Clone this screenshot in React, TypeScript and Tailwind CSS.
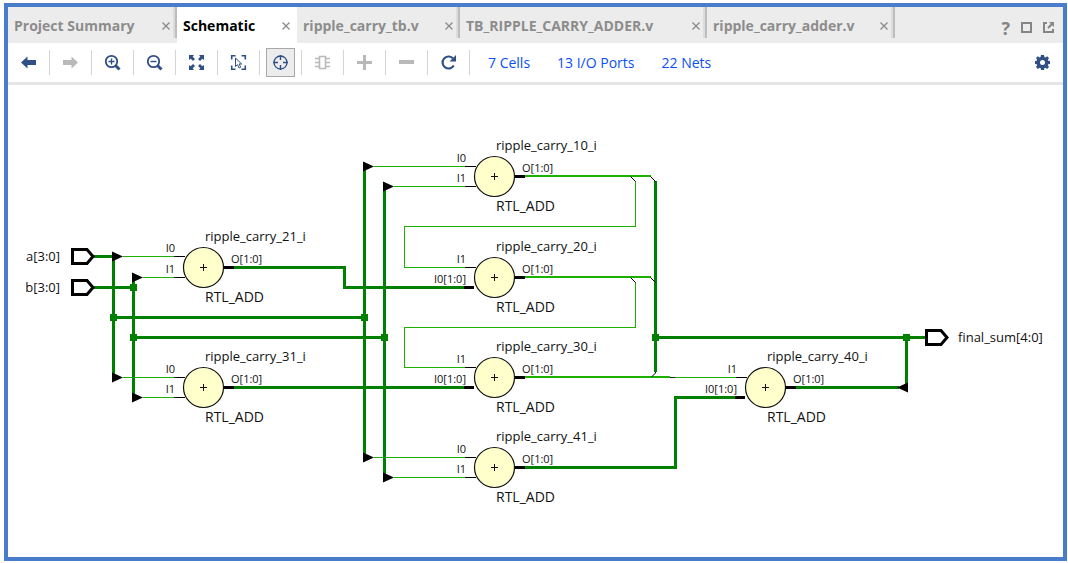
import type { ReactNode } from "react";

const NAVY = "#304f86";
const GREY = "#b9b9b9";

type Tab = { label: string; width: string; active?: boolean };

const tabs: Tab[] = [
  { label: "Project Summary", width: "w-[169px]" },
  { label: "Schematic", width: "w-[120px]", active: true },
  { label: "ripple_carry_tb.v", width: "w-[163px]" },
  { label: "TB_RIPPLE_CARRY_ADDER.v", width: "w-[247px]" },
  { label: "ripple_carry_adder.v", width: "w-[188px]" },
];

function TabItem({ label, width, active }: Tab) {
  return (
    <div className={`flex shrink-0 ${width} ${active ? "h-9 bg-white" : "h-[31px]"}`}>
      <div className="flex h-[38px] min-w-0 flex-1 items-center justify-between pl-[6px]">
        <button
          role="tab"
          aria-selected={!!active}
          className={`whitespace-nowrap text-[14px] font-bold leading-5 ${active ? "text-black" : "text-[#8c8c8c]"}`}
        >
          {label}
        </button>
        <button aria-label={`Close ${label}`} className={active ? "pr-[7px]" : "pr-[3px]"}>
          <svg width="8" height="8" viewBox="0 0 8 8" stroke="#8a8a8a" strokeWidth="1.3">
            <path d="M.5.5l7 7M7.5.5l-7 7" />
          </svg>
        </button>
      </div>
      {!active && <div className="h-[31px] w-1 border-r-2 border-[#bdbdbd] bg-[#dcdcdc]" />}
    </div>
  );
}

function Icon({ children, color = NAVY }: { children: ReactNode; color?: string }) {
  return (
    <svg width="17" height="17" viewBox="0 0 17 17" fill="none" stroke={color} color={color}>
      {children}
    </svg>
  );
}

const tools: { name: string; icon: ReactNode; active?: boolean; disabled?: boolean }[] = [
  {
    name: "Back",
    icon: <Icon><path d="M1 8.5L7.5 2.5V6H16v5H7.5v3.5z" fill="currentColor" stroke="none" /></Icon>,
  },
  {
    name: "Forward",
    disabled: true,
    icon: <Icon color={GREY}><path d="M16 8.5L9.5 2.5V6H1v5h8.5v3.5z" fill="currentColor" stroke="none" /></Icon>,
  },
  {
    name: "Zoom in",
    icon: (
      <Icon>
        <circle cx="7.5" cy="7.5" r="5.7" strokeWidth="1.8" />
        <path d="M4.5 7.5h6M7.5 4.5v6" strokeWidth="1.4" />
        <path d="M11.5 11.5l4 4" strokeWidth="3" />
      </Icon>
    ),
  },
  {
    name: "Zoom out",
    icon: (
      <Icon>
        <circle cx="7.5" cy="7.5" r="5.7" strokeWidth="1.8" />
        <path d="M4.5 7.5h6" strokeWidth="1.4" />
        <path d="M11.5 11.5l4 4" strokeWidth="3" />
      </Icon>
    ),
  },
  {
    name: "Zoom fit",
    icon: (
      <Icon>
        <path d="M1 1h5L4.7 2.7 7 5 5 7 2.7 4.7 1 6zM16 1v5l-1.7-1.3L12 7l-2-2 2.3-2.3L11 1zM1 16v-5l1.7 1.3L5 10l2 2-2.3 2.3L6 16zM16 16h-5l1.3-1.7L10 12l2-2 2.3 2.3L16 11z" fill="currentColor" stroke="none" />
      </Icon>
    ),
  },
  {
    name: "Select area",
    icon: (
      <Icon>
        <path d="M1.7 5.5V1.7H5.5M11.5 1.7h3.8v3.8M1.7 11.5v3.8H5.5M11.5 15.3h3.8v-3.8" strokeWidth="1.6" />
        <path d="M5.5 4v8.5l2-1.8 1.6 3.3 1.6-.8-1.6-3.2h2.6z" strokeWidth="1" />
      </Icon>
    ),
  },
  {
    name: "Auto fit selection",
    active: true,
    icon: (
      <Icon>
        <circle cx="8.5" cy="8.5" r="6.5" strokeWidth="1.3" />
        <path d="M8.5 1v5M8.5 11v5M1 8.5h5M11 8.5h5" strokeWidth="1.4" />
      </Icon>
    ),
  },
  {
    name: "Expand cell",
    disabled: true,
    icon: (
      <Icon color={GREY}>
        <path d="M5.5 2.5h6v12h-6z" strokeWidth="1.6" />
        <path d="M1 4.5h4M1 8.5h4M1 12.5h4M12 4.5h4M12 8.5h4M12 12.5h4" strokeWidth="1.4" />
      </Icon>
    ),
  },
  {
    name: "Add",
    disabled: true,
    icon: <Icon color={GREY}><path d="M1 8.5h15M8.5 1v15" strokeWidth="3" /></Icon>,
  },
  {
    name: "Remove",
    disabled: true,
    icon: <Icon color={GREY}><path d="M1 8h15" strokeWidth="4" /></Icon>,
  },
  {
    name: "Reload",
    icon: (
      <Icon>
        <path d="M13.8 11.5A6 6 0 1 1 12.8 4.2" strokeWidth="2.2" />
        <path d="M16 1v6.5H9.5z" fill="currentColor" stroke="none" />
      </Icon>
    ),
  },
];

const stats = ["7 Cells", "13 I/O Ports", "22 Nets"];

/* ---------- schematic ---------- */

type Pin = { label: string; dy: number; bus?: boolean };
type Cell = { name: string; x: number; y: number; pins: Pin[] };

const twoBits: Pin[] = [{ label: "I0", dy: -10 }, { label: "I1", dy: 10 }];
const bitAndBus: Pin[] = [{ label: "I1", dy: -10 }, { label: "I0[1:0]", dy: 10, bus: true }];

const cells: Cell[] = [
  { name: "ripple_carry_10_i", x: 494.5, y: 176.5, pins: twoBits },
  { name: "ripple_carry_20_i", x: 494.5, y: 277.5, pins: bitAndBus },
  { name: "ripple_carry_21_i", x: 203.5, y: 267.5, pins: [{ label: "I0", dy: -11 }, { label: "I1", dy: 10 }] },
  { name: "ripple_carry_30_i", x: 494.5, y: 377.5, pins: bitAndBus },
  { name: "ripple_carry_31_i", x: 203.5, y: 387.5, pins: twoBits },
  { name: "ripple_carry_40_i", x: 765.5, y: 387.5, pins: bitAndBus },
  { name: "ripple_carry_41_i", x: 494.5, y: 467.5, pins: twoBits },
];

const busWires = [
  "M94 256.5H114M113.5 256.5V377.5M94 287.5H133.5M133.5 277.5V397.5",
  "M113.5 317.5H364.5M364.5 166.5V457.5M133.5 337.5H384.5M384.5 186.5V477.5",
  "M234 267.5H344.5V287.5H464M234 387.5H464",
  "M525 467.5H675.5V397.5H735M655.5 181V372",
  "M655.5 337.5H925M906.5 337.5V387.5M796 387.5H899",
];

const bitWires = [
  "M123 256.5H174M143 277.5H174M123 377.5H174M143 397.5H174",
  "M374 166.5H465M394 186.5H465M374 457.5H465M394 477.5H465",
  "M635.5 181V226.5H404.5V267.5H465",
  "M635.5 282V327.5H404.5V367.5H465M675 377.5H736",
];

const junctions = [
  [113.5, 317.5], [133.5, 287.5], [133.5, 337.5], [364.5, 317.5],
  [384.5, 337.5], [655.5, 337.5], [906.5, 337.5],
];

const rippers = [
  [112, 256.5], [132, 277.5], [112, 377.5], [132, 397.5],
  [363, 166.5], [383, 186.5], [363, 457.5], [383, 477.5],
];

const ports = [
  { label: "a[3:0]", x: 71, y: 256.5, textX: 60, anchor: "end" as const },
  { label: "b[3:0]", x: 71, y: 287.5, textX: 60, anchor: "end" as const },
  { label: "final_sum[4:0]", x: 925, y: 337.5, textX: 958, anchor: "start" as const },
];

function AdderCell({ name, x, y, pins }: Cell) {
  return (
    <g>
      {pins.map((p) => (
        <g key={p.label}>
          <path
            d={`M${x - (p.bus ? 30.5 : 29.5)} ${y + p.dy}H${x - (p.bus ? 20.5 : 18.5)}`}
            stroke="#000"
            strokeWidth={p.bus ? 3 : 1}
            shapeRendering="crispEdges"
          />
          <text x={x - 28.5} y={y + p.dy - 4.5} textAnchor="end" className="text-[11px]">{p.label}</text>
        </g>
      ))}
      <path d={`M${x + 20} ${y}H${x + 30.5}`} stroke="#000" strokeWidth="3" shapeRendering="crispEdges" />
      <circle cx={x} cy={y} r="20" fill="#ffffcc" stroke="#111" strokeWidth="1.2" />
      <path d={`M${x - 3.5} ${y}h7M${x} ${y - 3.5}v7`} stroke="#111" strokeWidth="1" />
      <text x={x + 27.5} y={y - 4.5} className="text-[11px]">O[1:0]</text>
      <text x={x + 1.5} y={y - 26.5} className="text-[13px]">{name}</text>
      <text x={x + 1.5} y={y + 34.5} className="text-[14px]">RTL_ADD</text>
    </g>
  );
}

function Schematic() {
  return (
    <svg viewBox="8 85 1055 472" className="block h-auto w-full" role="img" aria-label="Ripple carry adder schematic" fill="#111">
      <g fill="none" shapeRendering="crispEdges">
        <path d={bitWires.join("")} stroke="#1cb000" strokeWidth="1" />
        <path d={busWires.join("")} stroke="#008000" strokeWidth="3" />
        <path d="M525 176H651M525 277H651M525 377H670" stroke="#1cb000" strokeWidth="2" />
        <path d="M670 377.5H675" stroke="#111" />
      </g>
      <path d="M630.5 176.5l5 5M650.5 176.5l5 5M630.5 277.5l5 5M650.5 277.5l5 5M655.5 372v1l-4 4" stroke="#000" fill="none" />
      {junctions.map(([x, y]) => (
        <rect key={`${x}-${y}`} x={x - 3.5} y={y - 3.5} width="7" height="7" fill="#008000" />
      ))}
      {rippers.map(([x, y]) => (
        <path key={`${x}-${y}`} d={`M${x} ${y - 5}L${x + 11} ${y}L${x} ${y + 5}z`} fill="#000" />
      ))}
      <path d="M908 382.5L897 387.5L908 392.5z" fill="#000" />
      {ports.map((p) => (
        <g key={p.label}>
          <path d={`M${p.x + 1.5} ${p.y - 7}h14.5l6 7l-6 7h-14.5z`} fill="#fff" stroke="#000" strokeWidth="3" />
          <text x={p.textX} y={p.y + 4} textAnchor={p.anchor} className="text-[13px]">{p.label}</text>
        </g>
      ))}
      {cells.map((c) => <AdderCell key={c.name} {...c} />)}
    </svg>
  );
}

export default function App() {
  return (
    <div className="flex min-h-screen flex-col bg-white pb-[2px] pl-1 pr-px pt-[3px] font-['Open_Sans',sans-serif]">
      <main className="flex flex-1 flex-col border-4 border-[#4a7ccc]">
        <header className="flex h-9 items-start justify-between bg-[#ececec]">
          <div role="tablist" className="flex">
            {tabs.map((t) => <TabItem key={t.label} {...t} />)}
          </div>
          <div className="flex h-[41px] items-center gap-[11px] pr-[9px] text-[#858585]">
            <button aria-label="Help" className="text-[18px] font-bold leading-4">?</button>
            <button aria-label="Maximize">
              <svg width="11" height="11" viewBox="0 0 11 11" fill="none" stroke="currentColor" strokeWidth="2">
                <path d="M1 1h9v9H1z" />
              </svg>
            </button>
            <button aria-label="Float">
              <svg width="11" height="11" viewBox="0 0 11 11" fill="none" stroke="currentColor">
                <path d="M4 1H1v9h9V7" strokeWidth="2" />
                <path d="M5 6l4-4" strokeWidth="2" />
                <path d="M6 0h5v5z" fill="currentColor" stroke="none" />
              </svg>
            </button>
          </div>
        </header>

        <div className="flex h-[42px] items-center justify-between border-b-[3px] border-[#e6e6e6]">
          <div className="flex items-center">
            {tools.map((t) => (
              <div key={t.name} className="flex h-[25px] w-[42px] items-center justify-center border-r border-[#d4d4d4]">
                <button
                  aria-label={t.name}
                  disabled={t.disabled}
                  className={`flex h-[29px] w-[29px] shrink-0 items-center justify-center border ${t.active ? "border-[#a8a8a8] bg-[#ececec]" : "border-transparent"}`}
                >
                  {t.icon}
                </button>
              </div>
            ))}
            <nav className="flex gap-[27px] pl-[18px] pt-px">
              {stats.map((s) => (
                <a key={s} href="#" className="whitespace-nowrap text-[14px] leading-5 text-[#0a50f5]">{s}</a>
              ))}
            </nav>
          </div>
          <button aria-label="Settings" className="pr-3">
            <svg width="17" height="17" viewBox="0 0 17 17" fill={NAVY}>
              <path fillRule="evenodd" d="M7 1h3l.4 2 1 .4L13.1 2.2l1.9 1.9-1.2 1.7.4 1L16 7v3l-1.8.3-.4 1 1.2 1.6-1.9 2-1.7-1.2-1 .4L10 16H7l-.4-1.9-1-.4-1.7 1.2-1.9-2 1.2-1.6-.4-1L1 10V7l1.8-.3.4-1L2 4.1l1.9-1.9 1.7 1.2 1-.4zM8.5 6a2.5 2.5 0 1 0 0 5 2.5 2.5 0 0 0 0-5z" />
            </svg>
          </button>
        </div>

        <section className="flex-1">
          <Schematic />
        </section>
      </main>
    </div>
  );
}
